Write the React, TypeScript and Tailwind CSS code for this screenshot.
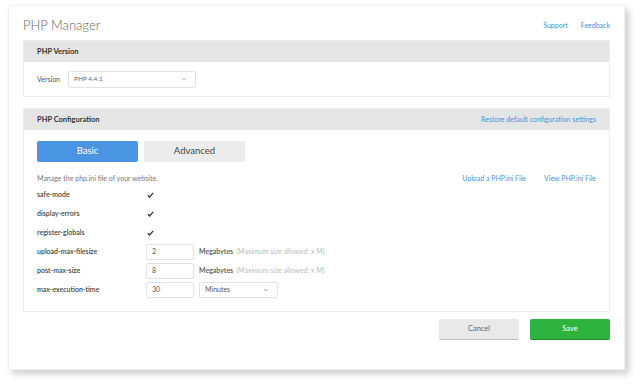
import React from "react";

const ChevronDown = () => (
  <svg width="6" height="4" viewBox="0 0 6 4" fill="none" className="text-gray-400">
    <path d="M1 1l2 2 2-2" stroke="currentColor" strokeWidth="0.8" />
  </svg>
);

const Check = () => (
  <svg width="7" height="6" viewBox="0 0 7 6" fill="none">
    <path d="M0.8 3.2l1.8 1.8L6.2 0.9" stroke="#333" strokeWidth="1.3" />
  </svg>
);

const rows = [
  { label: "safe-mode", kind: "check" },
  { label: "display-errors", kind: "check" },
  { label: "register-globals", kind: "check" },
  { label: "upload-max-filesize", kind: "mb", value: "2" },
  { label: "post-max-size", kind: "mb", value: "8" },
  { label: "max-execution-time", kind: "time", value: "30" },
];

const App: React.FC = () => {
  return (
    <div className="w-[640px] h-[385px] bg-white font-['Lato','Open_Sans',sans-serif] text-[#444] pt-[5px] pl-[8px]">
      <div className="w-[617px] h-[365px] bg-white border border-[#f2f2f2] shadow-[4px_4px_7px_rgba(0,0,0,0.2)] px-[14px] pt-[12px]">
        {/* header */}
        <div className="flex items-center h-[15px]">
          <h1 className="text-[13px] font-light text-[#666] leading-none">PHP Manager</h1>
          <div className="ml-auto flex gap-[13px] text-[7px] text-[#4a90d9]">
            <span>Support</span>
            <span>Feedback</span>
          </div>
        </div>

        {/* PHP Version */}
        <div className="mt-[7px] border border-[#ececec]">
          <div className="h-[21px] bg-[#e5e5e5] flex items-center px-[13px] text-[7.5px] font-bold text-[#333]">
            PHP Version
          </div>
          <div className="h-[34px] flex items-center px-[13px] gap-[8px]">
            <span className="text-[7px] text-[#555]">Version</span>
            <div className="w-[128px] h-[17px] border border-[#e2e2e2] rounded-[2px] flex items-center px-[5px] text-[6.5px] text-[#666]">
              <span>PHP 4.4.1</span>
              <span className="ml-auto mr-[3px]">
                <ChevronDown />
              </span>
            </div>
          </div>
        </div>

        {/* PHP Configuration */}
        <div className="mt-[11px] border border-[#ececec]">
          <div className="h-[21px] bg-[#e5e5e5] flex items-center px-[13px]">
            <span className="text-[7.5px] font-bold text-[#333]">PHP Configuration</span>
            <span className="ml-auto text-[7px] text-[#4a90d9]">Restore default configuration settings</span>
          </div>
          <div className="h-[181px] px-[13px] pt-[11px]">
            <div className="flex gap-[6px]">
              <div className="w-[101px] h-[21px] rounded-[2px] bg-[#4a95e3] text-white text-[9.5px] flex items-center justify-center">
                Basic
              </div>
              <div className="w-[101px] h-[21px] bg-[#ececec] text-[#444] text-[9.5px] flex items-center justify-center">
                Advanced
              </div>
            </div>
            <div className="mt-[10px] flex items-center h-[12px] text-[7px]">
              <span className="text-[#777]">Manage the php.ini file of your website.</span>
              <span className="ml-auto text-[#4a90d9]">Upload a PHP.ini File</span>
              <span className="ml-[18px] text-[#4a90d9]">View PHP.ini File</span>
            </div>
            <div className="mt-[1px] flex flex-col">
              {rows.map((r) => (
                <div key={r.label} className="h-[19px] flex items-center">
                  <span className="w-[109px] text-[7px] font-semibold text-[#444]">{r.label}</span>
                  {r.kind === "check" && (
                    <span className="ml-[1px]">
                      <Check />
                    </span>
                  )}
                  {r.kind !== "check" && (
                    <div className="w-[48px] h-[16px] border border-[#e2e2e2] rounded-[2px] flex items-center px-[5px] text-[7px] text-[#555]">
                      {r.value}
                    </div>
                  )}
                  {r.kind === "mb" && (
                    <span className="ml-[5px] text-[7px]">
                      <span className="text-[#555] font-semibold">Megabytes</span>
                      <span className="ml-[3px] text-[#bbb]">(Maximum size allowed: x M)</span>
                    </span>
                  )}
                  {r.kind === "time" && (
                    <div className="ml-[5px] w-[79px] h-[16px] border border-[#e2e2e2] rounded-[2px] flex items-center px-[5px] text-[7px] text-[#555]">
                      <span>Minutes</span>
                      <span className="ml-auto mr-[3px]">
                        <ChevronDown />
                      </span>
                    </div>
                  )}
                </div>
              ))}
            </div>
          </div>
        </div>

        {/* footer buttons */}
        <div className="mt-[7px] flex justify-end gap-[11px]">
          <button className="w-[80px] h-[21px] bg-[#e9e9e9] border-b border-[#bdbdbd] rounded-[2px] text-[7.5px] text-[#666]">
            Cancel
          </button>
          <button className="w-[80px] h-[21px] bg-[#2eb33f] border-b border-[#23912f] rounded-[2px] text-[7.5px] text-white">
            Save
          </button>
        </div>
      </div>
    </div>
  );
};

export default App;
